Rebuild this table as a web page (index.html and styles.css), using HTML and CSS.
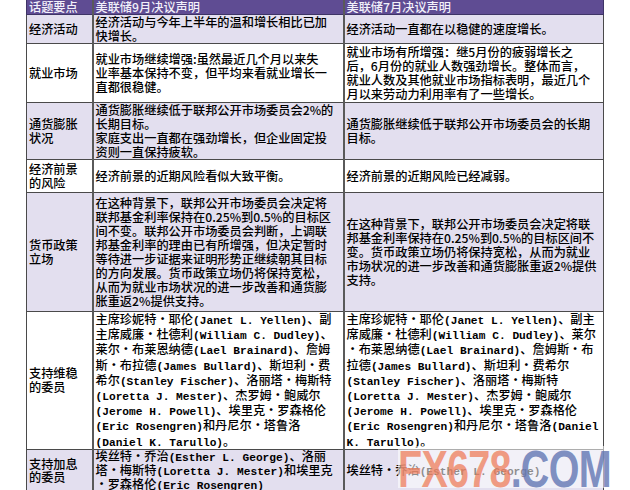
FILE: index.html
```html
<!DOCTYPE html>
<html lang="zh-CN">
<head>
<meta charset="utf-8">
<title>美联储决议声明对比</title>
<link rel="stylesheet" href="styles.css">
</head>
<body>
<div class="page">
<table class="cmp">
<colgroup><col class="c1"><col class="c2"><col class="c3"></colgroup>
<tr class="hd"><th>话题要点</th><th>美联储9月决议声明</th><th>美联储7月决议声明</th></tr>
<tr class="r1 alt"><td>经济活动</td><td>经济活动与今年上半年的温和增长相比已加<br>快增长。</td><td>经济活动一直都在以稳健的速度增长。</td></tr>
<tr class="r2"><td>就业市场</td><td>就业市场继续增强:虽然最近几个月以来失<br>业率基本保持不变，但平均来看就业增长一<br>直都很稳健。</td><td>就业市场有所增强：继5月份的疲弱增长之<br>后，6月份的就业人数强劲增长。整体而言，<br>就业人数及其他就业市场指标表明，最近几个<br>月以来劳动力利用率有了一些增长。</td></tr>
<tr class="r3 alt"><td>通货膨胀<br>状况</td><td>通货膨胀继续低于联邦公开市场委员会2%的<br>长期目标。<br>家庭支出一直都在强劲增长，但企业固定投<br>资则一直保持疲软。</td><td>通货膨胀继续低于联邦公开市场委员会的长期<br>目标。</td></tr>
<tr class="r4"><td>经济前景<br>的风险</td><td>经济前景的近期风险看似大致平衡。</td><td>经济前景的近期风险已经减弱。</td></tr>
<tr class="r5 alt"><td>货币政策<br>立场</td><td>在这种背景下，联邦公开市场委员会决定将<br>联邦基金利率保持在0.25%到0.5%的目标区<br>间不变。联邦公开市场委员会判断，上调联<br>邦基金利率的理由已有所增强，但决定暂时<br>等待进一步证据来证明形势正继续朝其目标<br>的方向发展。货币政策立场仍将保持宽松，<br>从而为就业市场状况的进一步改善和通货膨<br>胀重返2%提供支持。</td><td>在这种背景下，联邦公开市场委员会决定将联<br>邦基金利率保持在0.25%到0.5%的目标区间不<br>变。货币政策立场仍将保持宽松，从而为就业<br>市场状况的进一步改善和通货膨胀重返2%提供<br>支持。</td></tr>
<tr class="r6"><td>支持维稳<br>的委员</td><td>主席珍妮特·耶伦<span class="en">(Janet L. Yellen)</span>、副<br>主席威廉·杜德利<span class="en">(William C. Dudley)</span>、<br>莱尔·布莱恩纳德<span class="en">(Lael Brainard)</span>、詹姆<br>斯·布拉德<span class="en">(James Bullard)</span>、斯坦利·费<br>希尔<span class="en">(Stanley Fischer)</span>、洛丽塔·梅斯特<br><span class="en">(Loretta J. Mester)</span>、杰罗姆·鲍威尔<br><span class="en">(Jerome H. Powell)</span>、埃里克·罗森格伦<br><span class="en">(Eric Rosengren)</span>和丹尼尔·塔鲁洛<br><span class="en">(Daniel K. Tarullo)</span>。</td><td>主席珍妮特·耶伦<span class="en">(Janet L. Yellen)</span>、副主<br>席威廉·杜德利<span class="en">(William C. Dudley)</span>、莱尔<br>·布莱恩纳德<span class="en">(Lael Brainard)</span>、詹姆斯·布<br>拉德<span class="en">(James Bullard)</span>、斯坦利·费希尔<br><span class="en">(Stanley Fischer)</span>、洛丽塔·梅斯特<br><span class="en">(Loretta J. Mester)</span>、杰罗姆·鲍威尔<br><span class="en">(Jerome H. Powell)</span>、埃里克·罗森格伦<br><span class="en">(Eric Rosengren)</span>和丹尼尔·塔鲁洛<span class="en">(Daniel</span><br><span class="en">K. Tarullo)</span>。</td></tr>
<tr class="r7 alt"><td>支持加息<br>的委员</td><td>埃丝特·乔治<span class="en">(Esther L. George)</span>、洛丽<br>塔·梅斯特<span class="en">(Loretta J. Mester)</span>和埃里克<br>·罗森格伦<span class="en">(Eric Rosengren)</span></td><td>埃丝特·乔治<span class="en">(Esther L. George)</span></td></tr>
</table>
<div class="wm"><div class="wm-text"><span class="wm-a">FX678</span><span class="wm-b">.COM</span></div></div>
</div>
</body>
</html>
```
FILE: styles.css
```css
html, body {
  margin: 0;
  padding: 0;
  background: #ffffff;
}
.page {
  position: relative;
  width: 630px;
  height: 490px;
  overflow: hidden;
}
.cmp {
  margin-left: 26px;
  border-collapse: collapse;
  table-layout: fixed;
  width: 577px;
  font-family: "Noto Sans CJK SC", "Noto Sans", sans-serif;
  font-size: 12.2px;
  font-weight: 500;
  line-height: 14px;
  color: #000000;
}
.c1 { width: 66px; }
.c2 { width: 251px; }
.c3 { width: 260px; }
.cmp th, .cmp td {
  border: 1px solid #4a4a4a;
  padding: 0 0 0 2px;
  text-align: left;
  vertical-align: middle;
  white-space: nowrap;
}
.cmp td {
  overflow: hidden;
}
.cmp td + td, .cmp th + th {
  border-left: 2px solid #5a5a5a;
}
.cmp th {
  border-top: none;
}
.hd th {
  background: #5f4c93;
  color: #f2f0fa;
  font-weight: 500;
  height: 14px;
  line-height: 14px;
  padding-top: 0;
  padding-bottom: 0;
  vertical-align: middle;
  border-color: #3e3466;
}
.alt td { background: #e3dfef; }
.r1 td { height: 28px; }
.r2 td { height: 58px; }
.r3 td { height: 56px; }
.r4 td { height: 32px; }
.r5 td { height: 118px; }
.r6 td { height: 133px; }
.r7 td { height: 40px; line-height: 13.3px; }
.en {
  font-family: "Liberation Mono", monospace;
  font-size: 11.2px;
  line-height: 1;
  font-weight: bold;
}
.wm {
  position: absolute;
  left: 398px;
  top: 446px;
  width: 214px;
  height: 42px;
  background: rgba(255, 255, 255, 0.55);
  overflow: hidden;
}
.wm-text {
  font-family: "Liberation Sans", Arial, sans-serif;
  font-weight: bold;
  font-size: 52px;
  line-height: 42px;
  letter-spacing: -1px;
  white-space: nowrap;
  transform: scaleX(0.76);
  transform-origin: 0 50%;
  margin-top: 2px;
}
.wm-a { color: rgba(238, 120, 84, 0.72); }
.wm-b { color: rgba(96, 116, 178, 0.8); }
```
